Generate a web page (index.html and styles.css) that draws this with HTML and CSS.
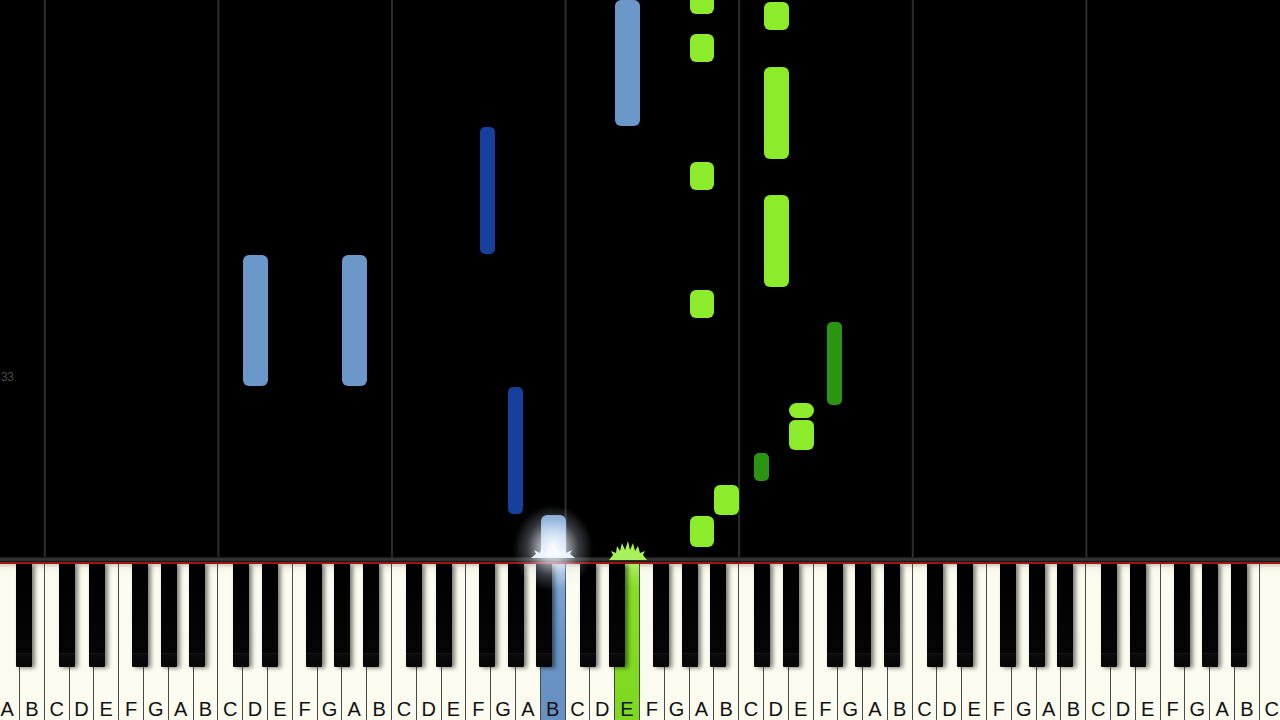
FILE: index.html
```html
<!DOCTYPE html>
<html lang="en">
<head>
<meta charset="utf-8">
<title>Piano roll</title>
<link rel="stylesheet" href="styles.css">
</head>
<body>
<div class="stage">
  <div class="field">
    <span class="measure">33</span>
    <div class="n lb" style="left:615.2px;top:0px;height:126px"></div>
    <div class="n lg" style="left:689.6px;top:-12px;height:26px"></div>
    <div class="n lg" style="left:689.6px;top:34px;height:28px"></div>
    <div class="n lg" style="left:764px;top:2px;height:28px"></div>
    <div class="n lg" style="left:764px;top:67px;height:92px"></div>
    <div class="n db" style="left:479.8px;top:127px;height:127px"></div>
    <div class="n lg" style="left:689.6px;top:162px;height:28px"></div>
    <div class="n lg" style="left:764px;top:195px;height:92px"></div>
    <div class="n lb" style="left:243.2px;top:255px;height:131px"></div>
    <div class="n lb" style="left:342.4px;top:255px;height:131px"></div>
    <div class="n lg" style="left:689.6px;top:290px;height:28px"></div>
    <div class="n dg" style="left:827px;top:322px;height:83px"></div>
    <div class="n lg pill" style="left:788.8px;top:403px;height:15px"></div>
    <div class="n lg" style="left:788.8px;top:420px;height:30px"></div>
    <div class="n dg" style="left:754.1px;top:453px;height:28px"></div>
    <div class="n db" style="left:508.4px;top:387px;height:127px"></div>
    <div class="n lg" style="left:714.4px;top:485px;height:30px"></div>
    <div class="n lg" style="left:689.6px;top:516px;height:31px"></div>
    <div class="n lb hot" style="left:540.8px;top:515px;height:50px"></div>
  </div>
  <div class="rail"></div>
  <div class="felt"></div>
  <div class="keyboard">
    <div class="whites">
      <div class="wk">A</div><div class="wk">B</div>
      <div class="wk">C</div><div class="wk">D</div><div class="wk">E</div><div class="wk">F</div><div class="wk">G</div><div class="wk">A</div><div class="wk">B</div>
      <div class="wk">C</div><div class="wk">D</div><div class="wk">E</div><div class="wk">F</div><div class="wk">G</div><div class="wk">A</div><div class="wk">B</div>
      <div class="wk">C</div><div class="wk">D</div><div class="wk">E</div><div class="wk">F</div><div class="wk">G</div><div class="wk">A</div><div class="wk on-blue">B</div>
      <div class="wk">C</div><div class="wk">D</div><div class="wk on-green">E</div><div class="wk">F</div><div class="wk">G</div><div class="wk">A</div><div class="wk">B</div>
      <div class="wk">C</div><div class="wk">D</div><div class="wk">E</div><div class="wk">F</div><div class="wk">G</div><div class="wk">A</div><div class="wk">B</div>
      <div class="wk">C</div><div class="wk">D</div><div class="wk">E</div><div class="wk">F</div><div class="wk">G</div><div class="wk">A</div><div class="wk">B</div>
      <div class="wk">C</div><div class="wk">D</div><div class="wk">E</div><div class="wk">F</div><div class="wk">G</div><div class="wk">A</div><div class="wk">B</div>
      <div class="wk">C</div>
    </div>
    <div class="bk" style="left:15.6px"></div>
    <div class="bk" style="left:59.2px"></div><div class="bk" style="left:88.6px"></div><div class="bk" style="left:132.1px"></div><div class="bk" style="left:160.7px"></div><div class="bk" style="left:189.2px"></div>
    <div class="bk" style="left:232.8px"></div><div class="bk" style="left:262.2px"></div><div class="bk" style="left:305.7px"></div><div class="bk" style="left:334.3px"></div><div class="bk" style="left:362.8px"></div>
    <div class="bk" style="left:406.4px"></div><div class="bk" style="left:435.8px"></div><div class="bk" style="left:479.3px"></div><div class="bk" style="left:507.9px"></div><div class="bk" style="left:536.4px"></div>
    <div class="bk" style="left:580px"></div><div class="bk" style="left:609.4px"></div><div class="bk" style="left:652.9px"></div><div class="bk" style="left:681.5px"></div><div class="bk" style="left:710px"></div>
    <div class="bk" style="left:753.6px"></div><div class="bk" style="left:783px"></div><div class="bk" style="left:826.5px"></div><div class="bk" style="left:855.1px"></div><div class="bk" style="left:883.6px"></div>
    <div class="bk" style="left:927.2px"></div><div class="bk" style="left:956.6px"></div><div class="bk" style="left:1000.1px"></div><div class="bk" style="left:1028.7px"></div><div class="bk" style="left:1057.2px"></div>
    <div class="bk" style="left:1100.8px"></div><div class="bk" style="left:1130.2px"></div><div class="bk" style="left:1173.7px"></div><div class="bk" style="left:1202.3px"></div><div class="bk" style="left:1230.8px"></div>
  </div>
  <svg class="spark spark-green" viewBox="0 0 38 20" width="38" height="20" aria-hidden="true">
    <polygon points="0,20 4,15 2,11 7,13 8,6 11,11 13,3 16,10 19,1 21,10 24,3 26,11 29,6 31,13 36,11 34,15 38,20"/>
  </svg>
  <svg class="spark spark-blue" viewBox="0 0 44 14" width="44" height="14" aria-hidden="true">
    <polygon points="0,14 5,10 3,6 9,9 11,4 14,9 18,5 22,9 26,5 30,9 33,4 35,9 41,6 39,10 44,14"/>
  </svg>
  <div class="glow"></div>
</div>
</body>
</html>
```

FILE: styles.css
```css
html, body {
  margin: 0;
  padding: 0;
  background: #000;
}

.stage {
  position: relative;
  width: 1280px;
  height: 720px;
  overflow: hidden;
  display: flex;
  flex-direction: column;
  background: #000;
}

.field {
  position: relative;
  flex: 0 0 557px;
  overflow: hidden;
  padding-right: 180px;
  background-image: linear-gradient(to right, #2c2c2c 0, #2c2c2c 2px, transparent 2px);
  background-size: 173.6px 100%;
  background-position: 43.8px 0;
  background-repeat: repeat-x;
  background-origin: content-box;
  background-clip: content-box;
}

.measure {
  position: absolute;
  left: 1px;
  top: 370px;
  font-family: "Liberation Sans", Arial, sans-serif;
  font-size: 12px;
  line-height: 14px;
  letter-spacing: -0.5px;
  color: #4a4a4a;
}

.n {
  position: absolute;
  box-sizing: border-box;
}

.lb {
  width: 24.8px;
  border-radius: 6px;
  background: #6b97c9;
}

.lb.hot {
  background: linear-gradient(#79a3d1, #a9c6e6 60%, #e6f0fb);
  border-radius: 6px 6px 0 0;
}

.db {
  width: 15px;
  border-radius: 5px;
  background: #173f9c;
}

.lg {
  width: 24.8px;
  border-radius: 6px;
  background: #8cec2b;
}

.lg.pill {
  border-radius: 7.5px;
}

.dg {
  width: 15px;
  border-radius: 5px;
  background: #2b9412;
}

.rail {
  flex: 0 0 5px;
  background: linear-gradient(#161616, #363636 40%, #2e2e2e 70%, #0c0c0c);
}

.felt {
  flex: 0 0 2px;
  background: #9c1616;
}

.keyboard {
  position: relative;
  flex: 0 0 156px;
  overflow: hidden;
}

.whites {
  display: flex;
  height: 100%;
  margin-left: -4.8px;
}

.wk {
  flex: 0 0 24.8px;
  box-sizing: border-box;
  border-right: 1px solid #4a4a4a;
  background: linear-gradient(#cfcdc0, #f4f3e6 4px, #fcfbef 10px);
  display: flex;
  align-items: flex-end;
  justify-content: center;
  padding-bottom: 1px;
  font-family: "Liberation Sans", Arial, sans-serif;
  font-size: 20px;
  line-height: 20px;
  color: #111;
}

.wk.on-blue {
  background: linear-gradient(#a9c6e6, #7ba3d0 24px, #6a94c5 80px, #6891c3);
}

.wk.on-green {
  background: linear-gradient(#a8f060, #84de24 24px, #7ed81f);
}

.bk {
  position: absolute;
  top: 0;
  width: 16px;
  height: 103px;
  box-sizing: border-box;
  background: linear-gradient(#000 0, #050505 86%, #161616 87%, #0a0a0a 88%, #060606 100%);
  box-shadow: 3px 1px 4px rgba(0, 0, 0, 0.5);
  border-radius: 0 0 1px 1px;
}

.spark {
  position: absolute;
}

.spark-green {
  left: 609px;
  top: 540px;
}

.spark-green polygon {
  fill: #a8f05c;
}

.spark-blue {
  left: 531px;
  top: 544px;
}

.spark-blue polygon {
  fill: #e6f0ff;
}

.glow {
  position: absolute;
  left: 513px;
  top: 505px;
  width: 80px;
  height: 86px;
  pointer-events: none;
  background: radial-gradient(ellipse at 50% 50%, rgba(255, 255, 255, 0.95) 0, rgba(240, 246, 255, 0.7) 12px, rgba(220, 232, 250, 0.25) 26px, rgba(255, 255, 255, 0) 40px);
}
```
